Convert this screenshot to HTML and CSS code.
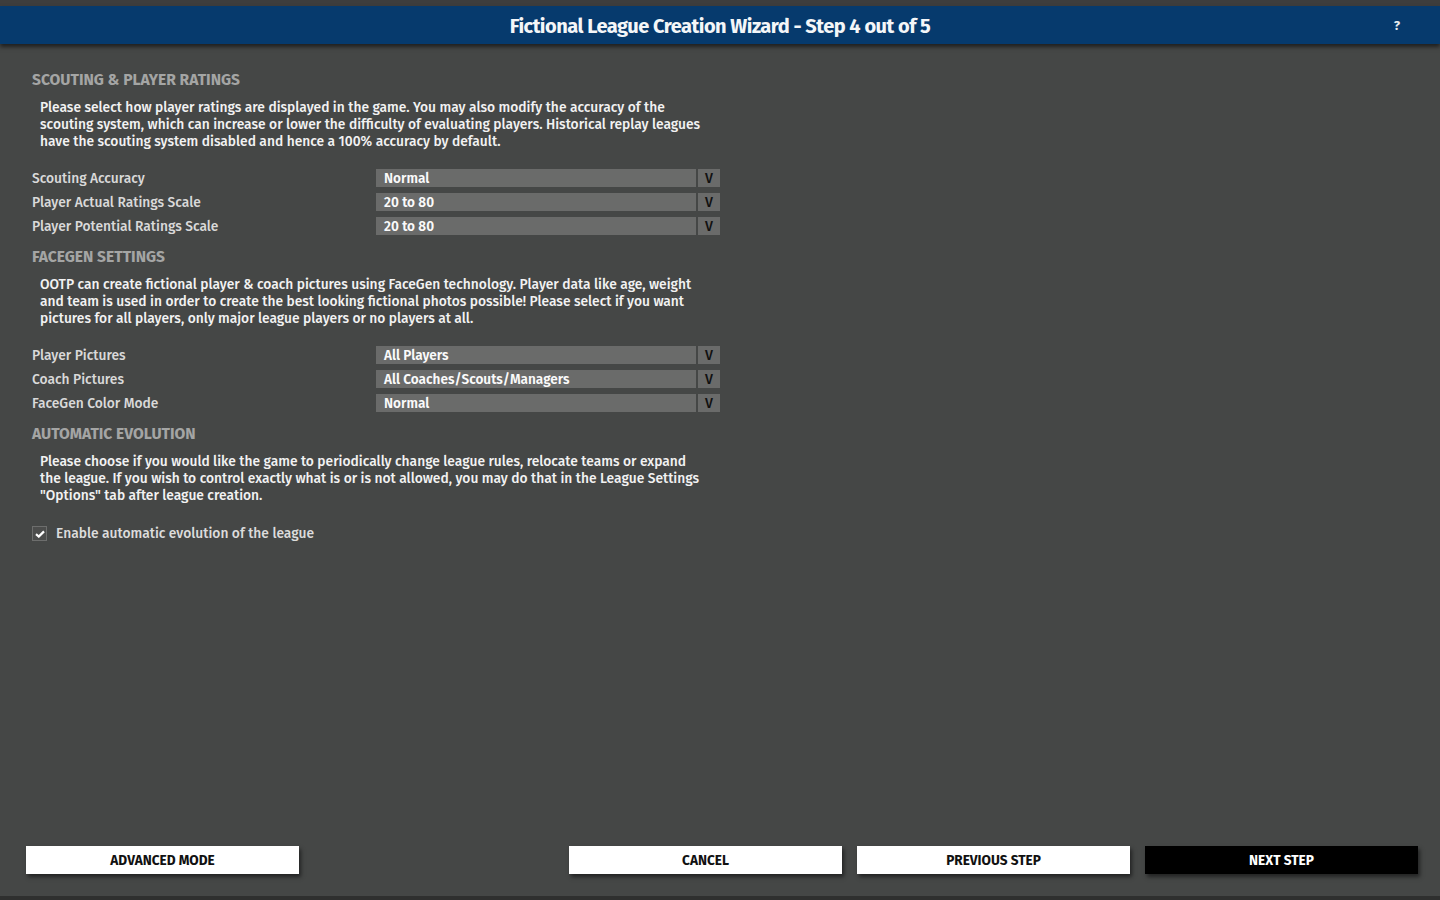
FILE: index.html
```html
<!DOCTYPE html>
<html lang="en">
<head>
    <meta charset="UTF-8">
    <title>Fictional League Creation Wizard</title>
    <link rel="stylesheet" href="styles.css">
</head>
<body>

    <div class="top-strip"></div>

    <div class="title-bar">
        <h1>Fictional League Creation Wizard - Step 4 out of 5</h1>
        <span class="help">?</span>
    </div>

    <div class="content">

        <h2>SCOUTING &amp; PLAYER RATINGS</h2>
        <p class="info">Please select how player ratings are displayed in the game. You may also modify the accuracy of the scouting system, which can increase or lower the difficulty of evaluating players. Historical replay leagues have the scouting system disabled and hence a 100% accuracy by default.</p>

        <div class="options">
            <div class="row">
                <span class="label">Scouting Accuracy</span>
                <div class="select"><span class="value">Normal</span><span class="arrow">V</span></div>
            </div>
            <div class="row">
                <span class="label">Player Actual Ratings Scale</span>
                <div class="select"><span class="value">20 to 80</span><span class="arrow">V</span></div>
            </div>
            <div class="row">
                <span class="label">Player Potential Ratings Scale</span>
                <div class="select"><span class="value">20 to 80</span><span class="arrow">V</span></div>
            </div>
        </div>

        <h2>FACEGEN SETTINGS</h2>
        <p class="info">OOTP can create fictional player &amp; coach pictures using FaceGen technology. Player data like age, weight and team is used in order to create the best looking fictional photos possible! Please select if you want pictures for all players, only major league players or no players at all.</p>

        <div class="options">
            <div class="row">
                <span class="label">Player Pictures</span>
                <div class="select"><span class="value">All Players</span><span class="arrow">V</span></div>
            </div>
            <div class="row">
                <span class="label">Coach Pictures</span>
                <div class="select"><span class="value">All Coaches/Scouts/Managers</span><span class="arrow">V</span></div>
            </div>
            <div class="row">
                <span class="label">FaceGen Color Mode</span>
                <div class="select"><span class="value">Normal</span><span class="arrow">V</span></div>
            </div>
        </div>

        <h2>AUTOMATIC EVOLUTION</h2>
        <p class="info">Please choose if you would like the game to periodically change league rules, relocate teams or expand the league. If you wish to control exactly what is or is not allowed, you may do that in the League Settings "Options" tab after league creation.</p>

        <label class="check">
            <span class="box">
                <svg width="10" height="8" viewBox="0 0 10 8"><path d="M1 4.2 L3.8 6.6 L9 1.4" fill="none" stroke="#fff" stroke-width="2.2"/></svg>
            </span>
            Enable automatic evolution of the league
        </label>

    </div>

    <div class="footer">
        <button class="btn">ADVANCED MODE</button>
        <div class="spacer"></div>
        <button class="btn">CANCEL</button>
        <button class="btn">PREVIOUS STEP</button>
        <button class="btn dark">NEXT STEP</button>
    </div>

    <div class="bottom-strip"></div>

</body>
</html>
```

FILE: styles.css
```css
html, body {
    margin: 0;
    height: 100%;
}

body {
    font-family: "Fira Sans", Roboto, "Noto Sans", sans-serif;
    background-color: #454746;
    color: #f0f0f0;
    display: flex;
    flex-direction: column;
    overflow: hidden;
}

.top-strip {
    height: 6px;
    background-color: #3d3d3d;
}

.title-bar {
    height: 38px;
    background-color: #063a6d;
    display: flex;
    align-items: center;
    justify-content: center;
    position: relative;
    box-shadow: 0 3px 4px rgba(0, 0, 0, 0.55);
}

.title-bar h1 {
    margin: 0 0 -2px;
    font-size: 20px;
    font-weight: 700;
    letter-spacing: -0.5px;
    color: #f4f6f8;
}

.help {
    position: absolute;
    right: 40px;
    top: 12px;
    font-size: 13px;
    font-weight: 700;
    color: #e8ecf0;
}

.content {
    flex: 1;
    padding: 27px 0 0 32px;
}

h2 {
    margin: 0;
    font-size: 15.6px;
    font-weight: 700;
    color: #a4a5a4;
    line-height: 18px;
}

.info {
    margin: 10px 0 0 8px;
    width: 666px;
    font-size: 13.8px;
    font-weight: 500;
    line-height: 17px;
    color: #f2f2f2;
}

.options {
    margin: 19px 0 13px;
    display: flex;
    flex-direction: column;
    gap: 6px;
}

.row {
    display: flex;
    align-items: center;
    height: 18px;
}

.label {
    width: 344px;
    font-size: 13.8px;
    font-weight: 500;
    color: #d9d9d9;
}

.select {
    display: flex;
    gap: 2px;
    height: 18px;
}

.value {
    width: 312px;
    padding-left: 8px;
    background-color: #6a6b6a;
    font-size: 13.6px;
    font-weight: 600;
    line-height: 19px;
    color: #fafafa;
}

.arrow {
    width: 22px;
    background-color: #6a6b6a;
    color: #111;
    font-size: 14px;
    font-weight: 500;
    text-align: center;
    line-height: 19px;
}

.check {
    display: flex;
    align-items: center;
    gap: 9px;
    margin-top: 21px;
    font-size: 13.8px;
    font-weight: 500;
    color: #dcdcdc;
}

.box {
    width: 13px;
    height: 13px;
    border: 1px solid #6d6e6d;
    background-color: #4c4d4c;
    display: flex;
    align-items: center;
    justify-content: center;
}

.footer {
    display: flex;
    gap: 15px;
    padding: 0 22px 22px 26px;
}

.spacer {
    flex: 1;
}

.btn {
    width: 273px;
    height: 28px;
    border: none;
    background-color: #fff;
    color: #111;
    font-family: inherit;
    font-size: 13.6px;
    font-weight: 700;
    box-shadow: 2px 3px 4px rgba(0, 0, 0, 0.5);
}

.btn.dark {
    background-color: #000;
    color: #fff;
}

.bottom-strip {
    height: 4px;
    background-color: #2f302f;
}
```
